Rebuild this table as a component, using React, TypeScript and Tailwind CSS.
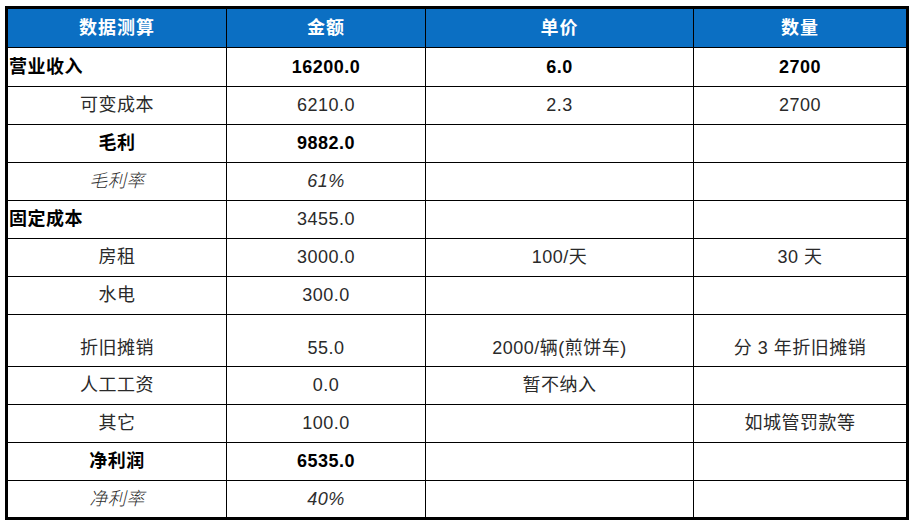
import React from 'react';

type Cell = { text?: string; bold?: boolean; italic?: boolean; left?: boolean };
type Row = { h: string; cells: Cell[]; tall?: boolean };

const rows: Row[] = [
  { h: 'h-[39px]', cells: [{ text: '营业收入', bold: true, left: true }, { text: '16200.0', bold: true }, { text: '6.0', bold: true }, { text: '2700', bold: true }] },
  { h: 'h-[38px]', cells: [{ text: '可变成本' }, { text: '6210.0' }, { text: '2.3' }, { text: '2700' }] },
  { h: 'h-[38px]', cells: [{ text: '毛利', bold: true }, { text: '9882.0', bold: true }, {}, {}] },
  { h: 'h-[38px]', cells: [{ text: '毛利率', italic: true }, { text: '61%', italic: true }, {}, {}] },
  { h: 'h-[38px]', cells: [{ text: '固定成本', bold: true, left: true }, { text: '3455.0' }, {}, {}] },
  { h: 'h-[38px]', cells: [{ text: '房租' }, { text: '3000.0' }, { text: '100/天' }, { text: '30 天' }] },
  { h: 'h-[38px]', cells: [{ text: '水电' }, { text: '300.0' }, {}, {}] },
  { h: 'h-[52px]', tall: true, cells: [{ text: '折旧摊销' }, { text: '55.0' }, { text: '2000/辆(煎饼车)' }, { text: '分 3 年折旧摊销' }] },
  { h: 'h-[38px]', cells: [{ text: '人工工资' }, { text: '0.0' }, { text: '暂不纳入' }, {}] },
  { h: 'h-[38px]', cells: [{ text: '其它' }, { text: '100.0' }, {}, { text: '如城管罚款等' }] },
  { h: 'h-[38px]', cells: [{ text: '净利润', bold: true }, { text: '6535.0', bold: true }, {}, {}] },
  { h: 'h-[36px]', cells: [{ text: '净利率', italic: true }, { text: '40%', italic: true }, {}, {}] },
];

const widths = ['w-[219px]', 'w-[199px]', 'w-[268px]', 'w-[212px]'];
const headers = ['数据测算', '金额', '单价', '数量'];

export default function App() {
  return (
    <div className="w-[914px] h-[524px] bg-white pt-[6px] pl-[5px]" style={{ fontFamily: '"Liberation Sans", "Noto Sans CJK SC", sans-serif' }}>
      <div className="w-[904px] border-[3px] border-black flex flex-col">
        <div className="flex h-[39px] bg-[#0b6fc3] border-b border-black">
          {headers.map((t, i) => (
            <div key={t} className={`${widths[i]} flex items-center justify-center text-white font-bold text-[18px] tracking-[1px] ${i < 3 ? 'border-r border-black' : ''}`}>
              {t}
            </div>
          ))}
        </div>
        {rows.map((r, ri) => (
          <div key={ri} className={`flex ${r.h} ${ri < rows.length - 1 ? 'border-b border-black' : ''}`}>
            {r.cells.map((c, ci) => (
              <div
                key={ci}
                className={`${widths[ci]} flex ${r.tall ? 'items-end pb-[4px]' : 'items-center'} ${c.left ? 'justify-start pl-[1px]' : 'justify-center'} ${ci < 3 ? 'border-r border-black' : ''} text-[18px] tracking-[0.5px] whitespace-nowrap ${c.bold ? 'font-bold text-black' : 'text-[#2a2a2a]'} ${c.italic ? 'italic font-light text-[#2e2e2e]' : ''}`}
              >
                {c.text}
              </div>
            ))}
          </div>
        ))}
      </div>
    </div>
  );
}
